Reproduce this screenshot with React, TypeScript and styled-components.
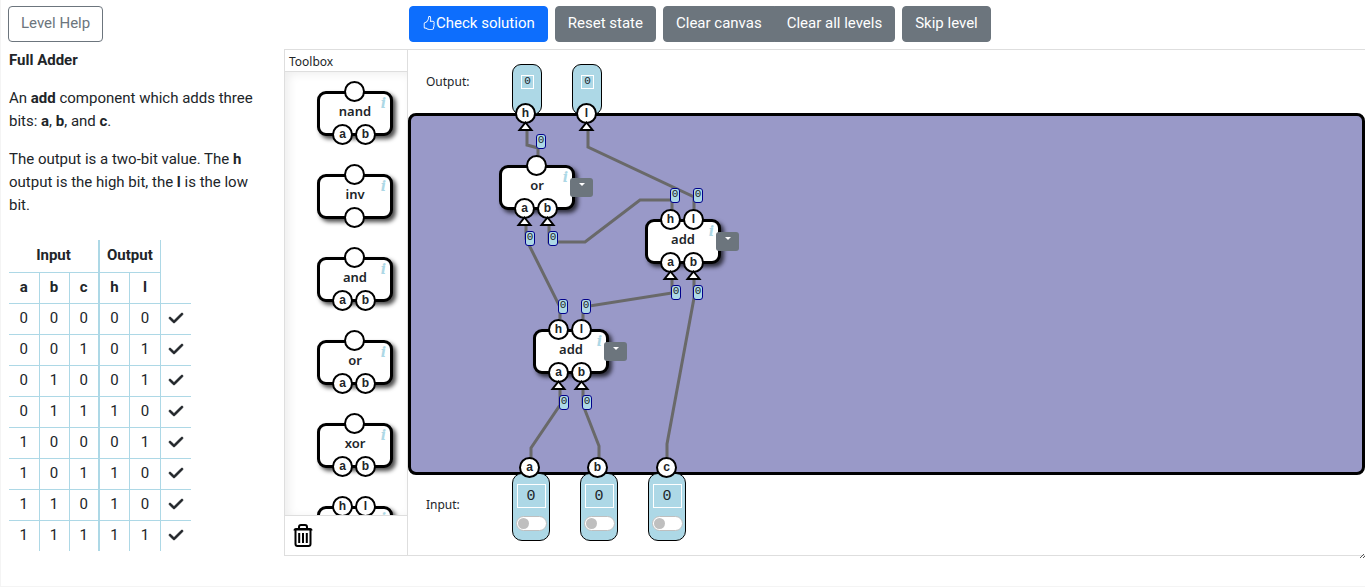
import React, { useState } from "react";
import styled, { createGlobalStyle, css } from "styled-components";
import { FaCheck } from "react-icons/fa6";
import { BsHandThumbsUp } from "react-icons/bs";

const GlobalStyle = createGlobalStyle`
  *, *::before, *::after { box-sizing: border-box; }
  body {
    margin: 0;
    background: #fff;
    color: #212529;
    font-family: Roboto, sans-serif;
    font-size: 15px;
    line-height: 23px;
  }
`;

const Page = styled.div`
  min-height: 100vh;
  display: grid;
  grid-template-columns: 283px minmax(0, 1fr);
  border-left: 1px solid #f4f4f4;
  border-bottom: 1px solid #f4f4f4;
`;

const Sidebar = styled.aside`
  padding: 6px 24px 0 8px;
`;

const Main = styled.main`
  display: flex;
  flex-direction: column;
`;

const buttonBase = css`
  height: 36px;
  padding: 0 12px 2px;
  border: 1px solid #6c757d;
  border-radius: 4px;
  font: inherit;
  cursor: pointer;
`;

const OutlineButton = styled.button`
  ${buttonBase}
  margin-left: -1px;
  background: transparent;
  color: #6c757d;
`;

const Button = styled.button<{ $primary?: boolean }>`
  ${buttonBase}
  display: flex;
  align-items: center;
  color: #fff;
  background: ${(p) => (p.$primary ? "#0d6efd" : "#6c757d")};
  border-color: ${(p) => (p.$primary ? "#0d6efd" : "#6c757d")};
`;

const ButtonGroup = styled.div`
  display: flex;
  ${Button}:first-child { border-radius: 4px 0 0 4px; }
  ${Button}:last-child { border-radius: 0 4px 4px 0; margin-left: -1px; }
`;

const ActionBar = styled.div`
  display: flex;
  gap: 7px;
  padding: 6px 0 7px 125px;
`;

const Heading = styled.h1`
  margin: 7px 0 15px;
  font-size: 15px;
  line-height: 23px;
  font-weight: 700;
`;

const Paragraph = styled.p`
  margin: 0 0 15px;
`;

const Truth = styled.table`
  margin-top: 23px;
  border-collapse: collapse;
  text-align: center;
`;

const Cell = styled.td<{ $edge?: "none" | "thin" | "thick" }>`
  height: 31px;
  min-width: 30px;
  padding: 0 7px;
  border-bottom: 1px solid #add8e6;
  border-right: ${(p) =>
    p.$edge === "none" ? "0" : p.$edge === "thick" ? "2px solid #add8e6" : "1px solid #add8e6"};
  thead tr:first-child & { height: 32px; }
  tbody tr:last-child & { border-bottom: 0; }
  svg { display: block; margin: 0 auto 2px; }
`;

const Workspace = styled.div`
  display: grid;
  grid-template-columns: 123px minmax(0, 1fr);
  height: 507px;
  border: 1px solid #dedede;
  border-right: 0;
`;

const Toolbox = styled.section`
  display: flex;
  flex-direction: column;
  min-height: 0;
  border-right: 1px solid #dedede;
`;

const ToolboxTitle = styled.h2`
  margin: 0;
  height: 22px;
  padding: 1px 4px;
  border-bottom: 1px solid #dedede;
  font: 400 12px/22px "Noto Sans", sans-serif;
`;

const ToolList = styled.div`
  flex: 1;
  min-height: 0;
  overflow: hidden;
  display: flex;
  flex-direction: column;
  gap: 38px;
  padding: 19px 0 0 32px;
  box-shadow: inset 4px 2px 10px #eee;
`;

const ToolFooter = styled.div`
  flex: none;
  height: 40px;
  padding: 8px;
  border-top: 1px solid #dedede;
`;

const TrashButton = styled.button`
  display: block;
  padding: 0;
  border: 0;
  background: none;
  svg { display: block; }
`;

const Canvas = styled.section`
  position: relative;
  display: flex;
  flex-direction: column;
  min-width: 0;
`;

const EdgeLabel = styled.div<{ $height: number }>`
  display: flex;
  align-items: center;
  flex: none;
  height: ${(p) => p.$height}px;
  padding: 0 18px;
  font: 400 12px/16px "Noto Sans", sans-serif;
`;

const Board = styled.div`
  flex: 1;
  border: 3px solid #000;
  border-radius: 8px;
  background: #9999c8;
`;

const InputEdge = styled.div`
  flex: none;
  height: 80px;
`;

const Wires = styled.svg`
  position: absolute;
  inset: 0;
  width: 100%;
  height: 100%;
  fill: none;
  stroke: #696969;
  stroke-width: 3;
  pointer-events: none;
`;

const Placed = styled.div<{ $x: number; $y: number }>`
  position: absolute;
  left: ${(p) => p.$x}px;
  top: ${(p) => p.$y}px;
`;

const GateRoot = styled.div`
  position: relative;
  flex: none;
  width: 76px;
  height: 45px;
`;

const GateBody = styled.div`
  height: 45px;
  border: 3px solid #000;
  border-radius: 9px;
  background: #fff;
  box-shadow: 3px 3px 4px rgba(0, 0, 0, 0.7);
  text-align: center;
  font: 600 13px/35px "Noto Sans", sans-serif;
`;

const Info = styled.span`
  position: absolute;
  top: 3px;
  right: 7px;
  color: #add8e6;
  font: italic 700 14px/18px "DejaVu Serif", serif;
`;

const PinRow = styled.div<{ $side: "top" | "bottom" }>`
  position: absolute;
  left: 0;
  right: 2px;
  top: ${(p) => (p.$side === "top" ? "-10px" : "33px")};
  display: flex;
  justify-content: center;
  gap: 2px;
`;

const PinCircle = styled.span`
  position: relative;
  display: block;
  width: 21px;
  height: 21px;
  border: 2px solid #000;
  border-radius: 50%;
  background: #fff;
  text-align: center;
  font: 700 12px/17px "Liberation Sans", sans-serif;
  color: #212529;
`;

const Arrow = styled.svg`
  position: absolute;
  left: 0;
  top: 16px;
  fill: #fff;
  stroke: #000;
  stroke-width: 2;
`;

const MenuButton = styled.button`
  position: absolute;
  left: 71px;
  top: 13px;
  display: flex;
  justify-content: center;
  align-items: flex-start;
  width: 23px;
  height: 19px;
  padding: 5px 0 0;
  border: 0;
  border-radius: 3px;
  background: #6c757d;
  svg { fill: #fff; }
`;

const Badge = styled.span`
  display: block;
  width: 10px;
  height: 15px;
  border: 1px solid #00008b;
  border-radius: 3px;
  background: #add8e6;
  text-align: center;
  font: 400 11px/11px "Liberation Mono", monospace;
`;

const OutputDevice = styled.div`
  width: 30px;
  height: 51px;
  padding: 10px 8px;
  border: 1px solid #000;
  border-radius: 9px;
  background: #add8e6;
`;

const InputDevice = styled.label`
  display: flex;
  flex-direction: column;
  align-items: center;
  gap: 8px;
  width: 38px;
  height: 68px;
  padding-top: 10px;
  border: 1px solid #000;
  border-radius: 10px;
  background: #add8e6;
`;

const Reading = styled.output<{ $large?: boolean }>`
  display: block;
  width: ${(p) => (p.$large ? 29 : 13)}px;
  height: ${(p) => (p.$large ? 24 : 14)}px;
  border: 1px solid #fff;
  text-align: center;
  font: 400 ${(p) => (p.$large ? "15px/23px" : "11px/11px")} "Liberation Mono", monospace;
`;

const Toggle = styled.input`
  appearance: none;
  width: 31px;
  height: 15px;
  margin: 0;
  padding: 1px;
  border: 1px solid #bfbfbf;
  border-radius: 8px;
  background: #fff;
  &::before {
    content: "";
    display: block;
    width: 11px;
    height: 11px;
    border-radius: 50%;
    background: #bfbfbf;
  }
  &:checked::before { margin-left: auto; }
`;

const Grip = styled.svg`
  position: absolute;
  right: 0;
  bottom: -4px;
`;

type PinProps = { name?: string; arrow?: boolean };

const Pin = ({ name, arrow }: PinProps) => (
  <PinCircle>
    {name}
    {arrow && (
      <Arrow width="17" height="11" viewBox="0 0 17 11">
        <path d="M8.5 1.5L14.5 9H2.5Z" />
      </Arrow>
    )}
  </PinCircle>
);

type GateProps = { name: string; outs: string[]; ins: string[]; live?: boolean };

const Gate = ({ name, outs, ins, live }: GateProps) => (
  <GateRoot>
    <GateBody>{name}</GateBody>
    <Info>i</Info>
    <PinRow $side="top">
      {outs.map((p, i) => <Pin key={i} name={p} />)}
    </PinRow>
    <PinRow $side="bottom">
      {ins.map((p, i) => <Pin key={i} name={p} arrow={live} />)}
    </PinRow>
    {live && (
      <MenuButton aria-label={`${name} menu`}>
        <svg width="6" height="3" viewBox="0 0 6 3"><path d="M0 0H6L3 3Z" /></svg>
      </MenuButton>
    )}
  </GateRoot>
);

const tools: GateProps[] = [
  { name: "nand", outs: [""], ins: ["a", "b"] },
  { name: "inv", outs: [""], ins: [""] },
  { name: "and", outs: [""], ins: ["a", "b"] },
  { name: "or", outs: [""], ins: ["a", "b"] },
  { name: "xor", outs: [""], ins: ["a", "b"] },
  { name: "add", outs: ["h", "l"], ins: ["a", "b"] },
];

const gates = [
  { x: 91, y: 115, name: "or", outs: [""], ins: ["a", "b"] },
  { x: 237, y: 169, name: "add", outs: ["h", "l"], ins: ["a", "b"] },
  { x: 125, y: 279, name: "add", outs: ["h", "l"], ins: ["a", "b"] },
];

const wires = [
  "M119 80V95L130 98V106",
  "M180 80V97L286 147V160",
  "M118 174V189L152 257V269",
  "M141 174V192H177L232 150H264V160",
  "M264 228V243L175 257V269",
  "M286 228V248L259 394V408",
  "M152 338V355L123 398V408",
  "M175 338V355L191 396V408",
];

const badges = [
  [128, 84], [117, 181], [140, 181], [262, 138], [285, 138], [263, 235],
  [285, 235], [150, 249], [173, 249], [151, 345], [174, 345],
];

const outputs = [
  { name: "h", x: 104, pin: 107 },
  { name: "l", x: 164, pin: 168 },
];

const inputs = [
  { name: "a", x: 104, pin: 111 },
  { name: "b", x: 172, pin: 179 },
  { name: "c", x: 240, pin: 248 },
];

const rows = ["00000", "00101", "01001", "01110", "10001", "10110", "11010", "11111"];
const columns = ["a", "b", "c", "h", "l"];

const Switch = ({ name }: { name: string }) => {
  const [on, setOn] = useState(false);
  return (
    <InputDevice>
      <Reading $large>{on ? 1 : 0}</Reading>
      <Toggle type="checkbox" aria-label={name} checked={on} onChange={() => setOn(!on)} />
    </InputDevice>
  );
};

const TrashIcon = () => (
  <svg width="20" height="23" viewBox="0 0 20 23" fill="none" stroke="#000">
    <path d="M6 4.500V3Q6 1 8 1H12Q14 1 14 3V4.500" strokeWidth="2" />
    <path d="M0.500 6.500Q0.500 4 3 4H17Q19.500 4 19.500 6.500Z" fill="#000" stroke="none" />
    <path d="M2.500 6V20Q2.500 22 4.500 22H15.500Q17.500 22 17.500 20V6" strokeWidth="2" />
    <path d="M6.200 9V19M10 9V19M13.800 9V19" strokeWidth="2" />
  </svg>
);

const App = () => (
  <>
    <GlobalStyle />
    <Page>
      <Sidebar>
        <OutlineButton>Level Help</OutlineButton>
        <Heading>Full Adder</Heading>
        <Paragraph>
          An <b>add</b> component which adds three bits: <b>a</b>, <b>b</b>, and <b>c</b>.
        </Paragraph>
        <Paragraph>
          The output is a two-bit value. The <b>h</b> output is the high bit, the <b>l</b> is the low bit.
        </Paragraph>
        <Truth>
          <thead>
            <tr>
              <Cell as="th" colSpan={3} $edge="thick">Input</Cell>
              <Cell as="th" colSpan={2}>Output</Cell>
            </tr>
            <tr>
              {columns.map((c) => (
                <Cell as="th" key={c} $edge={c === "c" ? "thick" : "thin"}>{c}</Cell>
              ))}
              <Cell $edge="none" />
            </tr>
          </thead>
          <tbody>
            {rows.map((r) => (
              <tr key={r}>
                {r.split("").map((v, i) => (
                  <Cell key={i} $edge={i === 2 ? "thick" : "thin"}>{v}</Cell>
                ))}
                <Cell $edge="none">
                  <FaCheck size={16} stroke="currentColor" strokeWidth={24} overflow="visible" />
                </Cell>
              </tr>
            ))}
          </tbody>
        </Truth>
      </Sidebar>
      <Main>
        <ActionBar>
          <Button $primary><BsHandThumbsUp size={14} />Check solution</Button>
          <Button>Reset state</Button>
          <ButtonGroup>
            <Button>Clear canvas</Button>
            <Button>Clear all levels</Button>
          </ButtonGroup>
          <Button>Skip level</Button>
        </ActionBar>
        <Workspace>
          <Toolbox>
            <ToolboxTitle>Toolbox</ToolboxTitle>
            <ToolList>
              {tools.map((t) => <Gate key={t.name} {...t} />)}
            </ToolList>
            <ToolFooter>
              <TrashButton aria-label="Trash"><TrashIcon /></TrashButton>
            </ToolFooter>
          </Toolbox>
          <Canvas>
            <EdgeLabel $height={63}>Output:</EdgeLabel>
            <Board />
            <InputEdge>
              <EdgeLabel $height={60}>Input:</EdgeLabel>
            </InputEdge>
            {outputs.map((o) => (
              <Placed key={o.name} $x={o.x} $y={14}>
                <OutputDevice><Reading>0</Reading></OutputDevice>
              </Placed>
            ))}
            {inputs.map((n) => (
              <Placed key={n.name} $x={n.x} $y={423}><Switch name={n.name} /></Placed>
            ))}
            <Wires>
              {wires.map((d) => <path key={d} d={d} />)}
            </Wires>
            {gates.map(({ x, y, ...g }) => (
              <Placed key={x} $x={x} $y={y}><Gate {...g} live /></Placed>
            ))}
            {outputs.map((o) => (
              <Placed key={o.name} $x={o.pin} $y={53}><Pin name={o.name} arrow /></Placed>
            ))}
            {inputs.map((n) => (
              <Placed key={n.name} $x={n.pin} $y={407}><Pin name={n.name} /></Placed>
            ))}
            {badges.map(([x, y]) => (
              <Placed key={`${x}-${y}`} $x={x} $y={y}><Badge>0</Badge></Placed>
            ))}
            <Grip width="5" height="5" viewBox="0 0 5 5" fill="none" stroke="#555">
              <path d="M0 4L4 0M3 4L5 2" />
            </Grip>
          </Canvas>
        </Workspace>
      </Main>
    </Page>
  </>
);

export default App;
